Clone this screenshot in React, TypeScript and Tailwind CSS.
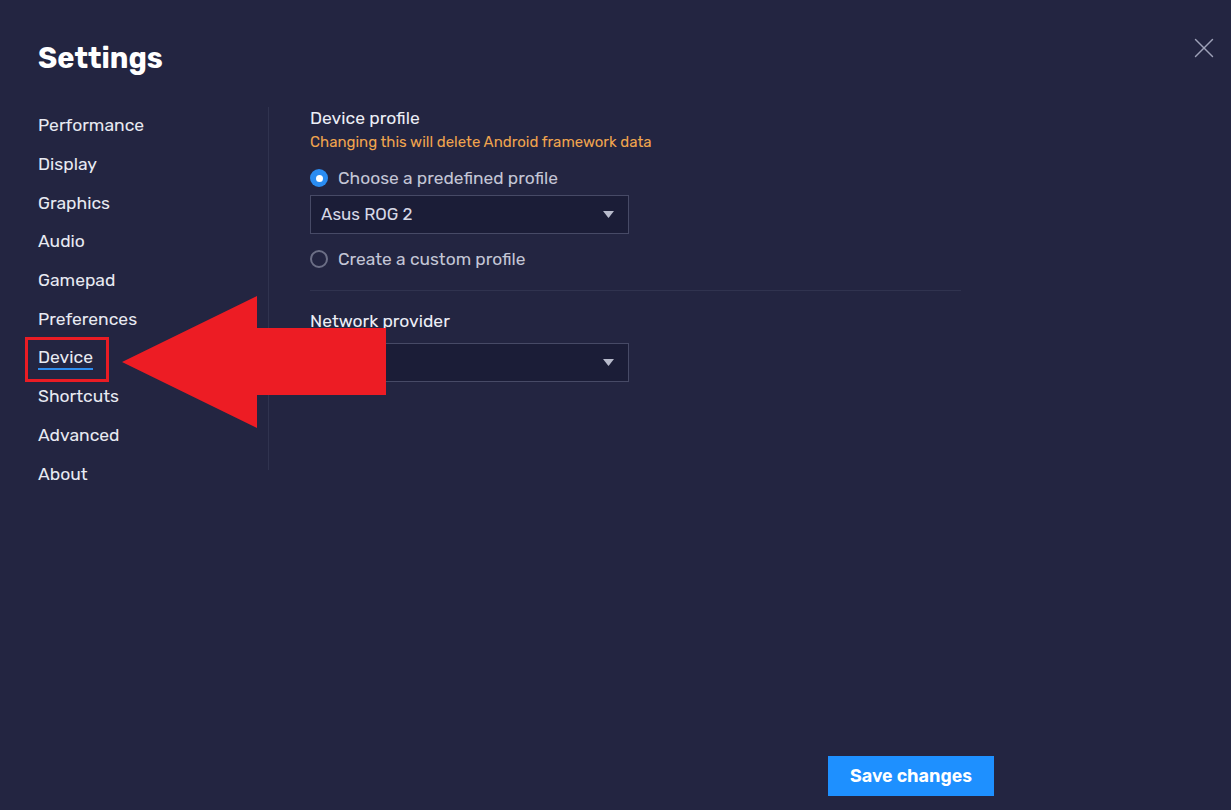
import { X } from 'lucide-react';

const menu = [
  'Performance',
  'Display',
  'Graphics',
  'Audio',
  'Gamepad',
  'Preferences',
  'Device',
  'Shortcuts',
  'Advanced',
  'About',
];

function Select({ value }: { value?: string }) {
  return (
    <div className="w-[319px] h-[39px] bg-[#1b1d37] border border-[#474a66] flex items-center justify-between pl-[10px] pr-[14px]">
      <span className="text-[17px] text-[#d6d8e6]">{value}</span>
      <svg width="11" height="8" viewBox="0 0 11 8">
        <polygon points="0,0 11,0 5.5,7" fill="#b8bbcc" />
      </svg>
    </div>
  );
}

function Radio({ checked, label }: { checked?: boolean; label: string }) {
  return (
    <div className="flex items-center gap-[10px] h-[24px]">
      {checked ? (
        <span className="w-[18px] h-[18px] rounded-full bg-[#2a8cf2] flex items-center justify-center">
          <span className="w-[7px] h-[7px] rounded-full bg-white" />
        </span>
      ) : (
        <span className="w-[18px] h-[18px] rounded-full border-2 border-[#6c6f86]" />
      )}
      <span className="text-[17.4px] text-[#c4c6d6]">{label}</span>
    </div>
  );
}

export default function App() {
  return (
    <div
      className="relative w-[1231px] h-[810px] bg-[#232541] overflow-hidden text-[#eceef6]"
      style={{ fontFamily: 'Rubik, Roboto, "Liberation Sans", sans-serif' }}
    >
      <button className="absolute left-[1187px] top-[31px] text-[#9ea1b8]">
        <X size={34} strokeWidth={1} />
      </button>

      <div className="pl-[38px] pt-[40px]">
        <h1 className="text-[29px] font-bold text-white leading-[36px]">Settings</h1>

        <div className="flex mt-[31px]">
          {/* Sidebar */}
          <div className="w-[230px] -mt-[1px]">
            {menu.map((m) => (
              <div key={m} className="h-[38.7px] flex items-center">
                <span
                  className={`inline-block text-[17.5px] leading-[22px] text-[#e8eaf2] ${
                    m === 'Device' ? 'shadow-[0_2px_0_0_#2f8ef0]' : ''
                  }`}
                >
                  {m}
                </span>
              </div>
            ))}
          </div>
          <div className="w-px h-[363px] bg-[#30334f]" />

          {/* Content */}
          <div className="pl-[41px] w-[692px]">
            <div className="text-[17.5px] leading-[22px] text-[#eceef6]">Device profile</div>
            <div className="text-[15px] leading-[20px] text-[#f0a44e] mt-[3px]">
              Changing this will delete Android framework data
            </div>
            <div className="mt-[14px]">
              <Radio checked label="Choose a predefined profile" />
            </div>
            <div className="mt-[5px]">
              <Select value="Asus ROG 2" />
            </div>
            <div className="mt-[13px]">
              <Radio label="Create a custom profile" />
            </div>
            <div className="border-t border-[#30334f] mt-[19px]" />
            <div className="text-[17.5px] leading-[22px] text-[#eceef6] mt-[19px]">Network provider</div>
            <div className="mt-[11px]">
              <Select />
            </div>
          </div>
        </div>
      </div>

      <button className="absolute left-[828px] top-[756px] w-[166px] h-[40px] bg-[#1e90ff] text-white text-[18px] font-semibold">
        Save changes
      </button>

      {/* Annotation */}
      <div className="absolute left-[25px] top-[337px] w-[84px] h-[45px] border-[3px] border-[#ea1c24]" />
      <svg className="absolute left-0 top-0" width="1231" height="810">
        <polygon
          points="122,362 257,296 257,328 386,328 386,395 257,395 257,428"
          fill="#ed1c24"
        />
      </svg>
    </div>
  );
}
